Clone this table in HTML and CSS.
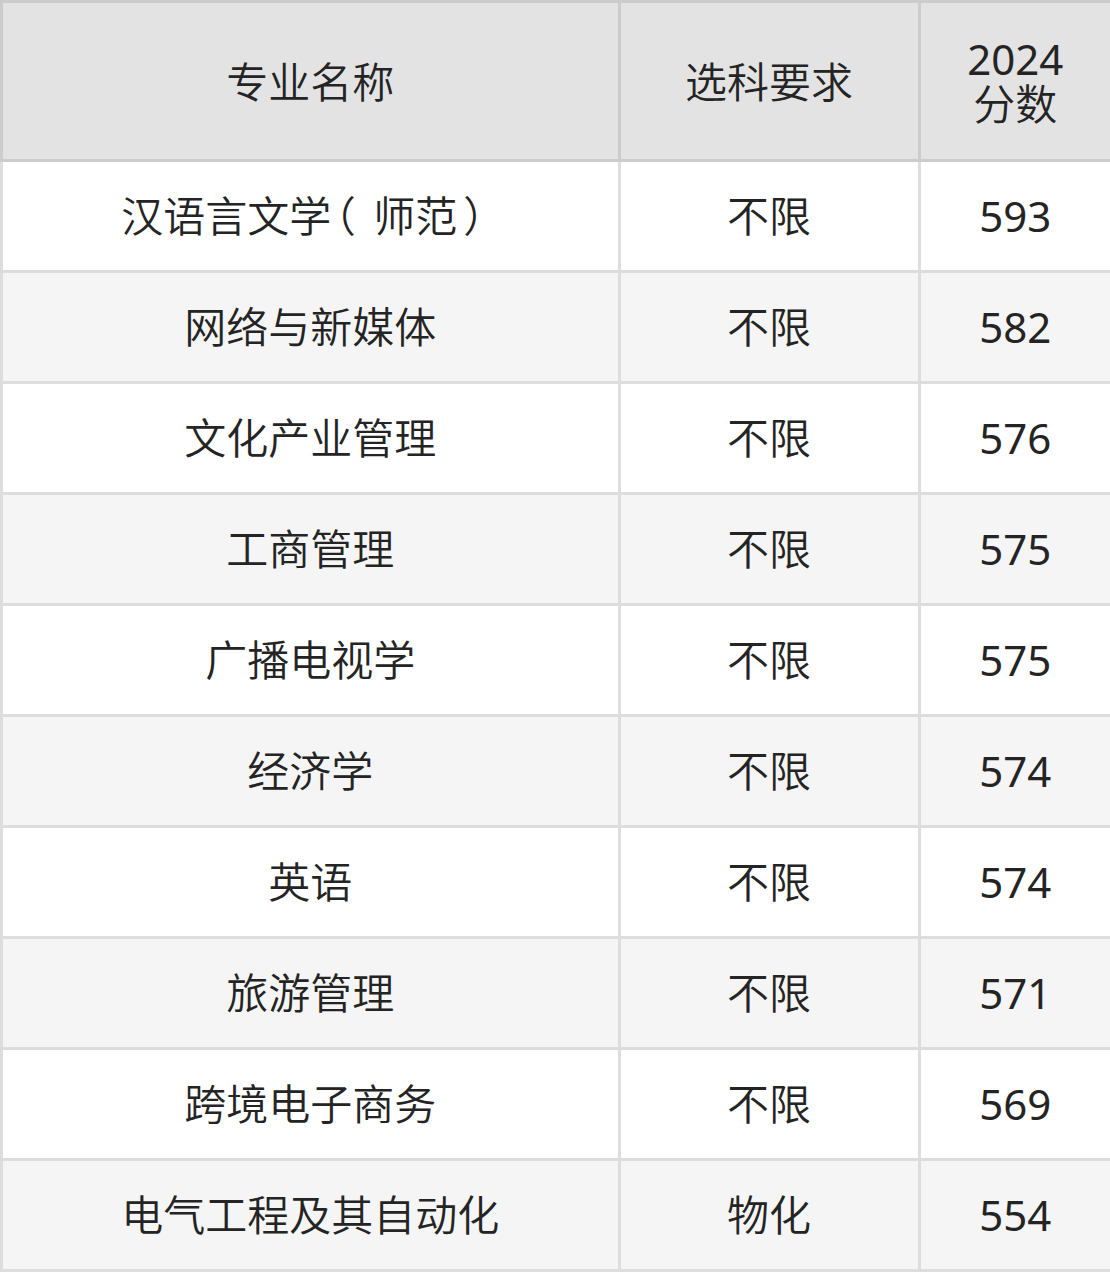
FILE: index.html
```html
<!DOCTYPE html>
<html lang="zh-CN">
<head>
<meta charset="utf-8">
<link rel="stylesheet" href="styles.css">
</head>
<body>
<table class="score-table">
  <colgroup>
    <col class="c-name">
    <col class="c-req">
    <col class="c-score">
  </colgroup>
  <thead>
    <tr>
      <th>专业名称</th>
      <th>选科要求</th>
      <th><span class="num">2024</span><br>分数</th>
    </tr>
  </thead>
  <tbody>
    <tr><td>汉语言文学<span class="p-open">（</span>师范<span class="p-close">）</span></td><td>不限</td><td class="num">593</td></tr>
    <tr><td>网络与新媒体</td><td>不限</td><td class="num">582</td></tr>
    <tr><td>文化产业管理</td><td>不限</td><td class="num">576</td></tr>
    <tr><td>工商管理</td><td>不限</td><td class="num">575</td></tr>
    <tr><td>广播电视学</td><td>不限</td><td class="num">575</td></tr>
    <tr><td>经济学</td><td>不限</td><td class="num">574</td></tr>
    <tr><td>英语</td><td>不限</td><td class="num">574</td></tr>
    <tr><td>旅游管理</td><td>不限</td><td class="num">571</td></tr>
    <tr><td>跨境电子商务</td><td>不限</td><td class="num">569</td></tr>
    <tr><td>电气工程及其自动化</td><td>物化</td><td class="num">554</td></tr>
  </tbody>
</table>
</body>
</html>
```

FILE: styles.css
```css
html, body {
  margin: 0;
  padding: 0;
  background: #ffffff;
}

.score-table {
  width: 1110px;
  border-collapse: collapse;
  table-layout: fixed;
  font-family: "Noto Sans", "Noto Sans CJK SC", sans-serif;
  font-size: 42px;
  font-weight: 350;
  color: #242424;
}

.c-name { width: 617.5px; }
.c-req { width: 300px; }
.c-score { width: 192.5px; }

.score-table th,
.score-table td {
  padding: 0;
  text-align: center;
  vertical-align: middle;
  font-weight: 350;
}

.score-table th {
  background: #e3e3e3;
  border: 3px solid #cccccc;
  height: 156px;
  line-height: 45px;
}

.score-table td {
  border: 3px solid #dddddd;
  height: 108px;
  line-height: 50px;
}

.score-table tbody tr:nth-child(even) td {
  background: #f5f5f5;
}

.score-table .num {
  font-weight: 400;
}

.p-open,
.p-close {
  display: inline-block;
  width: 1em;
  text-align: left;
  white-space: nowrap;
}

.p-open {
  text-indent: -0.42em;
}

.p-close {
  text-indent: 0.14em;
}
```
